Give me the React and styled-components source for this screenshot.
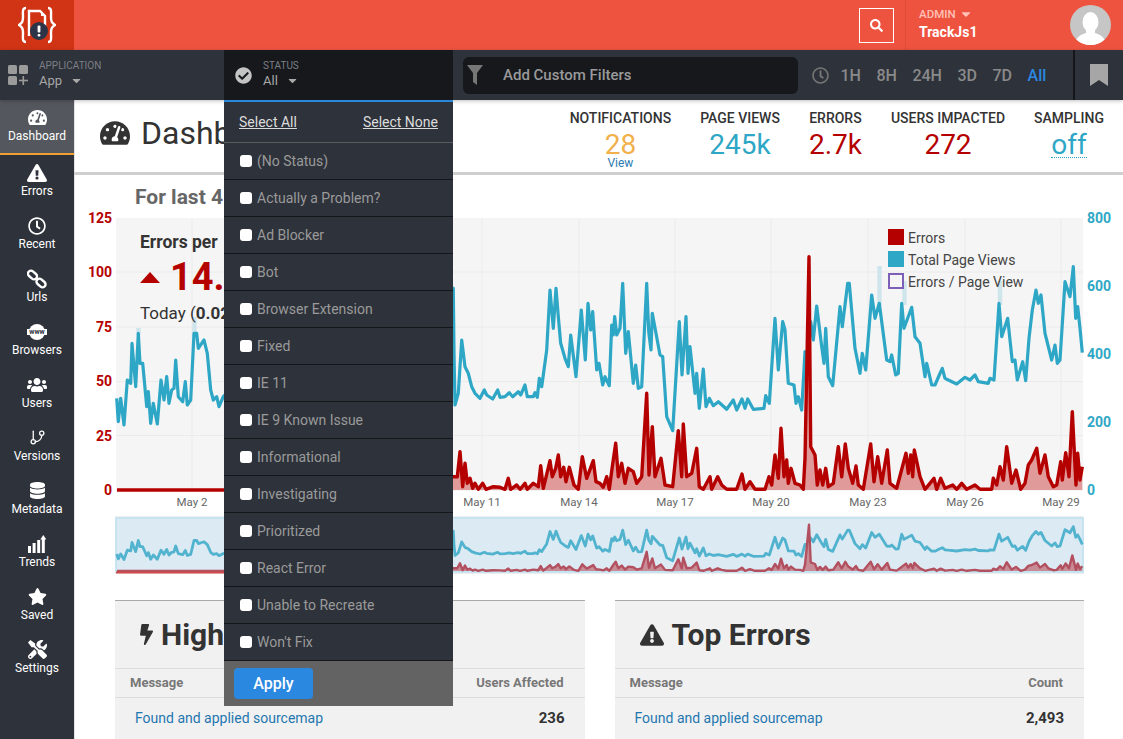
import React from "react";
import styled, { createGlobalStyle } from "styled-components";
import {
  FaBolt,
  FaCaretDown,
  FaCheckCircle,
  FaDatabase,
  FaExclamationTriangle,
  FaRegClock,
  FaSearch,
  FaStar,
  FaTachometerAlt,
  FaTools,
  FaUsers,
} from "react-icons/fa";
import { GitBranch } from "lucide-react";

// chart points are traced at 3x, fromCrop brings them back to page coordinates
const fromCrop = (ox, oy, pts) =>
  pts.map(([x, y]) => [ox + x / 3, oy + y / 3]);

const blueLine = [
  ...fromCrop(0, 200, [
    [350, 595], [355, 665], [362, 595], [372, 675], [382, 540], [392, 550], [396, 430], [407, 560],
    [415, 400], [420, 490], [428, 490], [440, 620], [445, 575], [452, 670], [460, 610], [472, 672],
    [483, 540], [492, 600], [500, 530], [507, 610], [515, 570], [522, 565], [527, 480], [535, 590],
    [548, 605], [556, 545], [562, 615], [572, 600], [582, 400], [590, 400], [595, 445], [605, 430],
    [612, 420], [622, 460], [632, 570], [640, 600], [650, 590], [657, 620], [670, 590],
  ]),
  [260, 360], [300, 410], [340, 330], [390, 400], [430, 340],
  ...fromCrop(450, 220, [
    [10, 205], [12, 400], [15, 555], [25, 520], [35, 360], [45, 440], [55, 460], [65, 500], [75, 520],
    [90, 535], [103, 510], [110, 525], [128, 537], [143, 510], [150, 532], [165, 530], [178, 518],
    [188, 530], [205, 515], [212, 525], [225, 495], [232, 530], [250, 530], [255, 518], [262, 532],
    [268, 475], [275, 500], [290, 390], [300, 210], [310, 325], [318, 205], [325, 290], [332, 370],
    [345, 415], [355, 440], [362, 345], [378, 470], [394, 270], [406, 420], [414, 250], [422, 330],
    [428, 275], [440, 450], [447, 430], [458, 495], [465, 470], [478, 497], [485, 315], [490, 345],
    [494, 290], [500, 345], [510, 325], [518, 190], [527, 400], [535, 335], [550, 490], [557, 435],
    [565, 505], [575, 500], [590, 190], [596, 335], [603, 390], [607, 280], [630, 405], [638, 410],
    [650, 590], [668, 632], [688, 305], [696, 465], [708, 290], [714, 460], [720, 380], [735, 520],
    [740, 460], [748, 565], [760, 447], [768, 560], [778, 535], [790, 557], [805, 545], [830, 568],
    [850, 540], [860, 570], [876, 537], [885, 565], [893, 537], [910, 568], [942, 565], [947, 527],
    [958, 550], [975, 295], [985, 450], [998, 305],
  ]),
  ...fromCrop(780, 220, [
    [15, 330], [25, 490], [42, 495], [48, 550], [55, 530], [65, 570], [75, 395], [82, 400], [92, 305],
    [100, 360], [110, 258], [125, 380], [132, 430], [137, 325], [145, 470], [158, 497], [180, 260],
    [187, 320], [203, 190], [208, 190], [225, 385], [240, 460], [247, 400], [257, 450], [275, 225],
    [285, 295], [298, 250], [320, 420], [330, 425], [335, 405], [347, 465], [355, 460], [365, 250],
    [372, 325], [395, 262], [405, 350], [420, 370], [435, 470], [440, 430], [455, 495], [465, 495],
    [478, 465], [487, 445], [495, 475], [505, 480], [530, 492], [555, 472], [570, 480], [585, 465],
    [595, 485], [625, 490], [630, 475], [642, 480], [657, 250], [665, 350], [683, 295], [697, 425],
    [705, 420], [712, 480], [728, 425], [737, 482], [747, 355], [757, 270], [768, 210], [775, 250],
    [783, 225], [795, 340], [815, 420], [825, 375], [832, 430], [840, 420], [855, 185], [870, 230],
    [880, 140], [887, 295], [893, 260], [900, 325], [907, 398],
  ]),
];

const redLine = [
  [117, 490], [224, 490], [300, 489], [400, 470],
  ...fromCrop(450, 220, [
    [10, 770], [22, 770], [30, 695], [38, 800], [45, 730], [52, 790], [60, 775], [68, 805], [75, 790],
    [85, 808], [98, 790], [108, 808], [130, 800], [150, 802], [165, 808], [175, 775], [182, 808],
    [200, 795], [210, 808], [225, 790], [232, 808], [250, 790], [265, 800], [272, 737], [280, 805],
    [300, 722], [307, 770], [317, 745], [325, 705], [332, 770], [341, 742], [348, 785], [358, 742],
    [372, 795], [385, 808], [397, 710], [410, 775], [430, 722], [438, 785], [450, 790], [460, 802],
    [470, 770], [478, 808], [487, 740], [497, 670], [505, 770], [515, 730], [525, 790], [535, 745],
    [550, 755], [560, 790], [575, 770], [590, 520], [597, 765], [607, 620], [615, 770], [633, 715],
    [645, 795], [668, 800], [685, 632], [695, 770], [700, 612], [710, 770], [725, 760], [740, 685],
    [748, 800], [760, 808], [780, 770], [785, 808], [803, 770], [815, 795], [830, 808], [860, 808],
    [876, 762], [885, 808], [900, 785], [915, 808], [945, 808], [957, 770], [965, 795], [975, 705],
    [985, 775], [993, 625],
  ]),
  ...fromCrop(780, 220, [
    [12, 770], [20, 720], [25, 790], [33, 745], [45, 790], [60, 795], [70, 808], [75, 715], [87, 110],
    [92, 680], [105, 705], [112, 795], [120, 750], [128, 795], [137, 745], [145, 800], [160, 790],
    [175, 680], [185, 770], [196, 672], [205, 745], [218, 790], [228, 738], [235, 795], [250, 808],
    [272, 672], [282, 785], [293, 710], [305, 790], [322, 690], [330, 790], [350, 805], [378, 700],
    [385, 760], [392, 705], [398, 770], [403, 690], [420, 770], [435, 808], [462, 775], [470, 808],
    [482, 775], [495, 805], [518, 795], [530, 808], [545, 790], [560, 808], [585, 795], [600, 808],
    [635, 808], [640, 775], [650, 795], [660, 740], [670, 780], [680, 680], [695, 790], [708, 750],
    [722, 808], [735, 790], [745, 735], [755, 720], [770, 685], [780, 760], [795, 705], [805, 770],
    [820, 800], [830, 795], [842, 725], [847, 780], [857, 698], [867, 770], [877, 575], [888, 795],
    [893, 700], [900, 780], [907, 740],
  ]),
];

const toPoints = (pts) => pts.map(([x, y]) => `${x.toFixed(1)},${y.toFixed(1)}`).join(" ");
const closeArea = (pts, base) =>
  toPoints([[pts[0][0], base], ...pts, [pts[pts.length - 1][0], base]]);

const miniBlue = blueLine.map(([x, y]) => [x, 530 + (y - 283) * 0.208]);
const miniRed = redLine.map(([x, y]) => [x, 570.7 + (y - 489) * 0.198]);

const leftTicks = [["125", 218], ["100", 272], ["75", 327], ["50", 381], ["25", 436], ["0", 490]];
const rightTicks = [["800", 218], ["600", 286], ["400", 354], ["200", 422], ["0", 490]];
const gridDays = [192, 289, 385, 482, 579, 675, 771, 868, 965, 1061];
// May 5 and May 8 sit under the open status menu
const dateTicks = [
  ["May 2", 192], ["May 11", 482], ["May 14", 579], ["May 17", 675], ["May 20", 771],
  ["May 23", 868], ["May 26", 965], ["May 29", 1061],
];
const paleBars = [[138.5, 328, 335], [194.5, 317, 335], [879.5, 266, 305], [904.5, 281, 305], [1000, 281, 305]];

const statusOptions = [
  "(No Status)", "Actually a Problem?", "Ad Blocker", "Bot", "Browser Extension", "Fixed", "IE 11",
  "IE 9 Known Issue", "Informational", "Investigating", "Prioritized", "React Error",
  "Unable to Recreate", "Won't Fix",
];

const LogoIcon = () => (
  <svg width="38" height="38" viewBox="0 0 38 38" fill="none">
    <path d="M8 2C4 2 5 6 5 11c0 5-1 6-4 8 3 2 4 3 4 8 0 5-1 9 3 9" stroke="#fff" strokeWidth="2.4" />
    <path d="M30 2c4 0 3 4 3 9 0 5 1 6 4 8-3 2-4 3-4 8 0 5 1 9-3 9" stroke="#fff" strokeWidth="2.4" />
    <path d="M11 30V5h11l5 5v10" stroke="#fff" strokeWidth="2.4" />
    <path d="M21 5h2v5h5" fill="#fff" />
    <circle cx="21" cy="25" r="9" fill="#2e3448" />
    <rect x="19.6" y="19.5" width="2.8" height="7" rx="1" fill="#fff" />
    <rect x="19.6" y="28" width="2.8" height="2.6" rx="1" fill="#fff" />
  </svg>
);

const AppsIcon = () => (
  <svg width="20" height="20" viewBox="0 0 20 20" fill="#9b9b9b">
    <rect x="0" y="0" width="9" height="9" rx="1.5" />
    <rect x="11" y="0" width="9" height="9" rx="1.5" />
    <rect x="0" y="11" width="9" height="9" rx="1.5" />
    <rect x="14.5" y="11" width="1.6" height="9" />
    <rect x="11" y="14.7" width="9" height="1.6" />
  </svg>
);

const FunnelIcon = () => (
  <svg width="16" height="20" viewBox="0 0 16 20" fill="#777">
    <path d="M0 0h16L10 8v12l-4-3V8z" />
  </svg>
);

const BookmarkIcon = () => (
  <svg width="18" height="22" viewBox="0 0 18 22" fill="#a6a6a6">
    <path d="M0 0h18v22l-9-6-9 6z" />
  </svg>
);

const AvatarIcon = () => (
  <svg width="41" height="40" viewBox="0 0 41 40">
    <defs>
      <clipPath id="avatarClip">
        <ellipse cx="20.5" cy="20" rx="20.5" ry="20" />
      </clipPath>
    </defs>
    <ellipse cx="20.5" cy="20" rx="20.5" ry="20" fill="#c6c6c6" />
    <g clipPath="url(#avatarClip)" fill="#fff">
      <ellipse cx="20.5" cy="17" rx="8" ry="10" />
      <path d="M16 25h9v3c6 2 10 4 11 12H5c1-8 5-10 11-12z" />
    </g>
  </svg>
);

const LinkIcon = () => (
  <svg width="20" height="20" viewBox="0 0 20 20" fill="none" stroke="#fff" strokeWidth="2.4">
    <rect x="0.5" y="3" width="10" height="6" rx="3" transform="rotate(40 5.5 6)" />
    <rect x="9" y="11" width="10" height="6" rx="3" transform="rotate(40 14 14)" />
  </svg>
);

const WwwIcon = () => (
  <svg width="20" height="16" viewBox="0 0 20 16">
    <circle cx="10" cy="8" r="8" fill="#fff" />
    <rect x="0" y="5" width="20" height="6" fill="#fff" />
    <text x="10" y="10.4" textAnchor="middle" fontSize="7" fontWeight="700" fontFamily="Roboto, sans-serif" fill="#2e323a">
      www
    </text>
  </svg>
);

const TrendsIcon = () => (
  <svg width="18" height="18" viewBox="0 0 18 18" fill="#fff">
    <rect x="0" y="11" width="3" height="7" />
    <rect x="4.6" y="8" width="3" height="10" />
    <rect x="9.2" y="5" width="3" height="13" />
    <rect x="13.8" y="4" width="3" height="14" />
    <path d="M15.3 0l3 4.5h-6z" />
  </svg>
);

const navItems = [
  { label: "Dashboard", icon: <FaTachometerAlt size={19} />, active: true },
  { label: "Errors", icon: <FaExclamationTriangle size={20} /> },
  { label: "Recent", icon: <FaRegClock size={18} /> },
  { label: "Urls", icon: <LinkIcon /> },
  { label: "Browsers", icon: <WwwIcon /> },
  { label: "Users", icon: <FaUsers size={20} /> },
  { label: "Versions", icon: <GitBranch size={17} strokeWidth={1.8} /> },
  { label: "Metadata", icon: <FaDatabase size={17} /> },
  { label: "Trends", icon: <TrendsIcon /> },
  { label: "Saved", icon: <FaStar size={19} /> },
  { label: "Settings", icon: <FaTools size={19} /> },
];

const stats = [
  { label: "NOTIFICATIONS", value: "28", color: "#f2b04a", link: "View" },
  { label: "PAGE VIEWS", value: "245k", color: "#2ea7c6" },
  { label: "ERRORS", value: "2.7k", color: "#b50000" },
  { label: "USERS IMPACTED", value: "272", color: "#b50000" },
  { label: "SAMPLING", value: "off", color: "#2ea7c6", dotted: true },
];

const legend = [
  { label: "Errors", color: "#b50000" },
  { label: "Total Page Views", color: "#2ea7c6" },
  { label: "Errors / Page View", outline: true },
];

const App = () => {
  return (
    <>
      <GlobalStyle />
      <Page>
        <TopBar>
          <LogoBlock>
            <LogoIcon />
          </LogoBlock>
          <SearchButton>
            <FaSearch size={13} />
          </SearchButton>
          <UserBlock>
            <UserText>
              <AdminLabel>
                ADMIN <FaCaretDown size={14} />
              </AdminLabel>
              <UserName>TrackJs1</UserName>
            </UserText>
            <AvatarIcon />
          </UserBlock>
        </TopBar>

        <FilterBar>
          <AppPicker>
            <AppsIcon />
            <PickerText>
              <PickerLabel>APPLICATION</PickerLabel>
              <PickerValue>
                App <FaCaretDown size={13} />
              </PickerValue>
            </PickerText>
          </AppPicker>

          <StatusPicker>
            <StatusHead>
              <FaCheckCircle size={17} color="#c4c4c4" />
              <PickerText>
                <PickerLabel>STATUS</PickerLabel>
                <PickerValue>
                  All <FaCaretDown size={13} />
                </PickerValue>
              </PickerText>
            </StatusHead>
            <StatusMenu>
              <MenuActions>
                <MenuAction>Select All</MenuAction>
                <MenuAction>Select None</MenuAction>
              </MenuActions>
              {statusOptions.map((option) => (
                <MenuOption key={option}>
                  <OptionBox type="checkbox" />
                  {option}
                </MenuOption>
              ))}
              <MenuFooter>
                <ApplyButton>Apply</ApplyButton>
              </MenuFooter>
            </StatusMenu>
          </StatusPicker>

          <CustomFilter>
            <FunnelIcon />
            Add Custom Filters
          </CustomFilter>

          <TimeRange>
            <RangeClock size={17} color="#777" />
            {["1H", "8H", "24H", "3D", "7D", "All"].map((range) => (
              <RangeLink key={range} $active={range === "All"}>
                {range}
              </RangeLink>
            ))}
          </TimeRange>

          <BookmarkBlock>
            <BookmarkIcon />
          </BookmarkBlock>
        </FilterBar>

        <Body>
          <Sidebar>
            {navItems.map((item) => (
              <NavItem key={item.label} $active={item.active}>
                <NavIcon>{item.icon}</NavIcon>
                {item.label}
              </NavItem>
            ))}
          </Sidebar>

          <Main>
            <PageHeader>
              <PageTitle>
                <FaTachometerAlt size={30} />
                Dashb
              </PageTitle>
              <StatRow>
                {stats.map((stat) => (
                  <Stat key={stat.label}>
                    <StatLabel>{stat.label}</StatLabel>
                    <StatValue $color={stat.color} $dotted={stat.dotted}>
                      {stat.value}
                    </StatValue>
                    {stat.link && <StatLink>{stat.link}</StatLink>}
                  </Stat>
                ))}
              </StatRow>
            </PageHeader>

            <Period>For last 4</Period>

            <ChartArea>
              <svg width="1049" height="370" viewBox="74 210 1049 370" style={{ display: "block" }}>
                <rect x="116" y="218" width="967" height="273" fill="#f5f5f5" />
                {[272, 327, 381.5, 435.5].map((y) => (
                  <line key={y} x1="116" x2="1083" y1={y} y2={y} stroke="#ebebeb" />
                ))}
                {gridDays.map((x) => (
                  <line key={x} x1={x} x2={x} y1="218" y2="491" stroke="#ebebeb" />
                ))}
                {paleBars.map(([x, y1, y2]) => (
                  <line key={x} x1={x} x2={x} y1={y1} y2={y2} stroke="#cfe5ec" strokeWidth="4.5" />
                ))}
                <polyline
                  points={toPoints(blueLine)}
                  fill="none"
                  stroke="#2ea7c6"
                  strokeWidth="3.2"
                  strokeLinejoin="round"
                />
                <polygon points={closeArea(redLine, 490)} fill="#e09a9a" />
                <polyline
                  points={toPoints(redLine)}
                  fill="none"
                  stroke="#b50000"
                  strokeWidth="3.4"
                  strokeLinejoin="round"
                />
                {leftTicks.map(([label, y]) => (
                  <AxisText key={label} x="112" y={y + 5} textAnchor="end" fill="#b50000">
                    {label}
                  </AxisText>
                ))}
                {rightTicks.map(([label, y]) => (
                  <AxisText key={label} x="1087" y={y + 5} fill="#2ea7c6">
                    {label}
                  </AxisText>
                ))}
                {dateTicks.map(([label, x]) => (
                  <DateText key={label} x={x} y="505.5" textAnchor="middle">
                    {label}
                  </DateText>
                ))}

                <rect x="115" y="516" width="969" height="58" fill="#eeeeee" />
                <rect x="116" y="518" width="967" height="54" fill="#dceaf3" stroke="#a8dcf2" />
                <polyline
                  points={toPoints(miniBlue)}
                  fill="none"
                  stroke="#52b3cf"
                  strokeWidth="2.8"
                  strokeLinejoin="round"
                />
                <polygon points={closeArea(miniRed, 571)} fill="#c78c96" />
                <polyline
                  points={toPoints(miniRed)}
                  fill="none"
                  stroke="#b3505f"
                  strokeWidth="2.4"
                  strokeLinejoin="round"
                />
                <line x1="116" x2="224" y1="572.5" y2="572.5" stroke="#cf4a4a" strokeWidth="2" />
              </svg>

              <RateCard>
                <RateTitle>Errors per</RateTitle>
                <RateValue>
                  <RateArrow />
                  14.
                </RateValue>
                <RateToday>
                  Today (<b>0.02</b>
                </RateToday>
              </RateCard>

              <Legend>
                {legend.map((entry) => (
                  <LegendRow key={entry.label}>
                    <LegendSwatch $color={entry.color} $outline={entry.outline} />
                    {entry.label}
                  </LegendRow>
                ))}
              </Legend>
            </ChartArea>

            <PanelGrid>
              <Panel>
                <PanelTitle>
                  <BoltIcon />
                  High
                </PanelTitle>
                <PanelHead>
                  <span>Message</span>
                  <span>Users Affected</span>
                </PanelHead>
                <PanelRow>
                  <PanelLink>Found and applied sourcemap</PanelLink>
                  <PanelCount>236</PanelCount>
                </PanelRow>
              </Panel>
              <Panel>
                <PanelTitle>
                  <FaExclamationTriangle size={24} />
                  Top Errors
                </PanelTitle>
                <PanelHead>
                  <span>Message</span>
                  <span>Count</span>
                </PanelHead>
                <PanelRow>
                  <PanelLink>Found and applied sourcemap</PanelLink>
                  <PanelCount>2,493</PanelCount>
                </PanelRow>
              </Panel>
            </PanelGrid>
          </Main>
        </Body>
      </Page>
    </>
  );
};

const GlobalStyle = createGlobalStyle`
  html, body {
    margin: 0;
    height: 100%;
    overflow: hidden;
    font-family: Roboto, "Liberation Sans", sans-serif;
    background: #fff;
  }
`;

const Page = styled.div`
  width: 1123px;
  height: 739px;
  display: flex;
  flex-direction: column;
  overflow: hidden;
`;

const TopBar = styled.header`
  height: 50px;
  flex: none;
  display: flex;
  align-items: center;
  background-color: #ee5340;
`;

const LogoBlock = styled.div`
  width: 74px;
  height: 100%;
  display: flex;
  align-items: center;
  justify-content: center;
  background-color: #d13415;
`;

const SearchButton = styled.button`
  width: 35px;
  height: 35px;
  margin-left: auto;
  display: flex;
  align-items: center;
  justify-content: center;
  padding: 0;
  color: #fff;
  background: transparent;
  border: 1px solid #fff;
`;

const UserBlock = styled.div`
  width: 218px;
  height: 100%;
  margin-left: 11px;
  box-sizing: border-box;
  padding: 0 12px 0 13px;
  display: flex;
  align-items: center;
  justify-content: space-between;
  border-left: 1px solid #e04a38;
`;

const UserText = styled.div`
  margin-top: -3px;
  display: flex;
  flex-direction: column;
  gap: 3px;
`;

const AdminLabel = styled.div`
  display: flex;
  align-items: center;
  gap: 3px;
  font-size: 11.5px;
  font-weight: 500;
  color: #ffc0b6;
`;

const UserName = styled.div`
  font-size: 14px;
  font-weight: 700;
  color: #fff;
`;

const FilterBar = styled.div`
  height: 50px;
  flex: none;
  display: flex;
  align-items: center;
  position: relative;
  z-index: 2;
  background-color: #2e323a;
  box-shadow: 0 1px 4px rgba(0, 0, 0, 0.25);
`;

const AppPicker = styled.div`
  width: 224px;
  flex: none;
  box-sizing: border-box;
  padding-left: 8px;
  display: flex;
  align-items: center;
  gap: 11px;
`;

const PickerText = styled.div`
  margin-top: -2px;
  display: flex;
  flex-direction: column;
  gap: 2px;
`;

const PickerLabel = styled.div`
  font-size: 10px;
  color: #7c7f85;
`;

const PickerValue = styled.div`
  display: flex;
  align-items: center;
  gap: 8px;
  font-size: 13px;
  color: #a8a8a8;
`;

const StatusPicker = styled.div`
  width: 229px;
  flex: none;
  height: 100%;
  position: relative;
`;

const StatusHead = styled.div`
  height: 50px;
  box-sizing: border-box;
  padding-left: 11px;
  display: flex;
  align-items: center;
  gap: 11px;
  background-color: #16181c;
`;

const StatusMenu = styled.div`
  position: absolute;
  top: 50px;
  left: 0;
  width: 100%;
  background-color: #2e323a;
  border-top: 2px solid #2a88dc;
`;

const MenuActions = styled.div`
  height: 41px;
  box-sizing: border-box;
  padding: 0 15px 1px;
  display: flex;
  align-items: center;
  justify-content: space-between;
  border-bottom: 1px solid #5a5c60;
`;

const MenuAction = styled.a`
  font-size: 14px;
  color: #dcdcdc;
  text-decoration: underline;
`;

const MenuOption = styled.label`
  height: 37px;
  box-sizing: border-box;
  padding-left: 16px;
  display: flex;
  align-items: center;
  gap: 5px;
  font-size: 14px;
  color: #9a9a9a;
  border-bottom: 1px solid #14161a;
`;

const OptionBox = styled.input`
  appearance: none;
  width: 12px;
  height: 12px;
  margin: 0;
  background-color: #fff;
  border-radius: 3px;
`;

const MenuFooter = styled.div`
  height: 45px;
  box-sizing: border-box;
  padding: 7px 10px;
  background-color: #636363;
`;

const ApplyButton = styled.button`
  width: 79px;
  height: 31px;
  padding: 0;
  border: none;
  border-radius: 4px;
  font-family: inherit;
  font-size: 16px;
  font-weight: 500;
  color: #fff;
  background-color: #2a88e0;
`;

const CustomFilter = styled.div`
  width: 335px;
  height: 37px;
  flex: none;
  margin-left: 10px;
  box-sizing: border-box;
  padding-left: 4px;
  display: flex;
  align-items: center;
  gap: 20px;
  font-size: 15px;
  font-weight: 500;
  color: #9a9a9a;
  background-color: #16181c;
  border-radius: 6px;
`;

const TimeRange = styled.div`
  margin-left: 14px;
  display: flex;
  align-items: center;
  gap: 15.5px;
`;

const RangeClock = styled(FaRegClock)`
  margin-right: -4px;
`;

const RangeLink = styled.span`
  font-size: 16px;
  font-weight: 500;
  color: ${(props) => (props.$active ? "#2a88e0" : "#8a8a8a")};
`;

const BookmarkBlock = styled.div`
  width: 50px;
  height: 100%;
  margin-left: auto;
  display: flex;
  align-items: center;
  justify-content: center;
  border-left: 2px solid #14161a;
  box-sizing: border-box;
`;

const Body = styled.div`
  flex: 1;
  min-height: 0;
  display: flex;
`;

const Sidebar = styled.nav`
  width: 74px;
  flex: none;
  background-color: #2e323a;
`;

const NavItem = styled.div`
  height: ${(props) => (props.$active ? "55px" : "53px")};
  box-sizing: border-box;
  padding-top: 7px;
  display: flex;
  flex-direction: column;
  align-items: center;
  gap: 1px;
  font-size: 12px;
  font-weight: 400;
  color: #fff;
  background-color: ${(props) => (props.$active ? "#54585e" : "transparent")};
  border-bottom: ${(props) => (props.$active ? "2px solid #f0a030" : "none")};
`;

const NavIcon = styled.div`
  height: 21px;
  display: flex;
  align-items: center;
  justify-content: center;
`;

const Main = styled.main`
  flex: 1;
  min-width: 0;
  box-shadow: inset 1px 0 #e2e2e2;
`;

const PageHeader = styled.div`
  height: 75px;
  box-sizing: border-box;
  padding: 10px 19px 0 26px;
  display: flex;
  justify-content: space-between;
  border-bottom: 3px solid #cfcfcf;
`;

const PageTitle = styled.h1`
  margin: 3px 0 0;
  height: 40px;
  display: flex;
  align-items: center;
  gap: 11px;
  font-size: 32px;
  font-weight: 400;
  color: #333;
`;

const StatRow = styled.div`
  display: flex;
  gap: 29px;
`;

const Stat = styled.div`
  display: flex;
  flex-direction: column;
  align-items: center;
`;

const StatLabel = styled.div`
  font-size: 14px;
  font-weight: 500;
  line-height: 16px;
  color: #333;
`;

const StatValue = styled.div`
  margin-top: 7px;
  font-size: 28px;
  line-height: 24px;
  color: ${(props) => props.$color};
  border-bottom: ${(props) => (props.$dotted ? `1px dotted ${props.$color}` : "none")};
`;

const StatLink = styled.a`
  font-size: 12px;
  line-height: 12px;
  color: #2a7ab0;
`;

const Period = styled.div`
  height: 35px;
  box-sizing: border-box;
  padding: 9px 0 0 61px;
  font-size: 21px;
  font-weight: 700;
  line-height: 26px;
  color: #666;
`;

const ChartArea = styled.div`
  position: relative;
  height: 370px;
`;

const AxisText = styled.text`
  font-size: 14px;
  font-weight: 700;
`;

const DateText = styled.text`
  font-size: 11.5px;
  fill: #666;
`;

const RateCard = styled.div`
  position: absolute;
  top: 22px;
  left: 66px;
  color: #333;
`;

const RateTitle = styled.div`
  font-size: 17.5px;
  font-weight: 700;
  line-height: 21px;
`;

const RateValue = styled.div`
  display: flex;
  align-items: center;
  gap: 10px;
  font-size: 38px;
  font-weight: 700;
  line-height: 48px;
  color: #b50000;
`;

const RateArrow = styled.span`
  width: 0;
  height: 0;
  border-left: 10px solid transparent;
  border-right: 10px solid transparent;
  border-bottom: 11px solid #b50000;
`;

const RateToday = styled.div`
  font-size: 17px;
  line-height: 24px;
`;

const Legend = styled.div`
  position: absolute;
  top: 19px;
  left: 814px;
  display: flex;
  flex-direction: column;
  gap: 6px;
`;

const LegendRow = styled.div`
  height: 16px;
  display: flex;
  align-items: flex-start;
  gap: 4px;
  font-size: 14px;
  line-height: 18px;
  color: #444;
`;

const LegendSwatch = styled.span`
  width: 16px;
  height: 16px;
  box-sizing: border-box;
  background-color: ${(props) => props.$color || "transparent"};
  border: ${(props) => (props.$outline ? "2px solid #7e5fb8" : "none")};
`;

const PanelGrid = styled.div`
  margin-top: 20px;
  padding: 0 39px 0 41px;
  display: grid;
  grid-template-columns: 1fr 1fr;
  gap: 30px;
`;

const Panel = styled.section`
  background-color: #f1f1f1;
  border-top: 1px solid #aaa;
`;

const PanelTitle = styled.h2`
  height: 68px;
  margin: 0;
  box-sizing: border-box;
  padding-left: 25px;
  display: flex;
  align-items: center;
  gap: 8px;
  font-size: 30px;
  font-weight: 700;
  color: #333;
  border-bottom: 1px solid #dcdcdc;
`;

const BoltIcon = styled(FaBolt)`
  width: 13px;
  height: 21px;
`;

const PanelHead = styled.div`
  height: 29px;
  box-sizing: border-box;
  padding: 0 21px 2px 15px;
  display: flex;
  align-items: center;
  justify-content: space-between;
  font-size: 13px;
  font-weight: 700;
  color: #777;
  border-bottom: 1px solid #dcdcdc;
`;

const PanelRow = styled.div`
  height: 42px;
  box-sizing: border-box;
  padding: 0 20px 2px;
  display: flex;
  align-items: center;
  justify-content: space-between;
`;

const PanelLink = styled.a`
  font-size: 14px;
  color: #1f77b0;
`;

const PanelCount = styled.span`
  font-size: 15px;
  font-weight: 700;
  color: #333;
`;

export default App;
